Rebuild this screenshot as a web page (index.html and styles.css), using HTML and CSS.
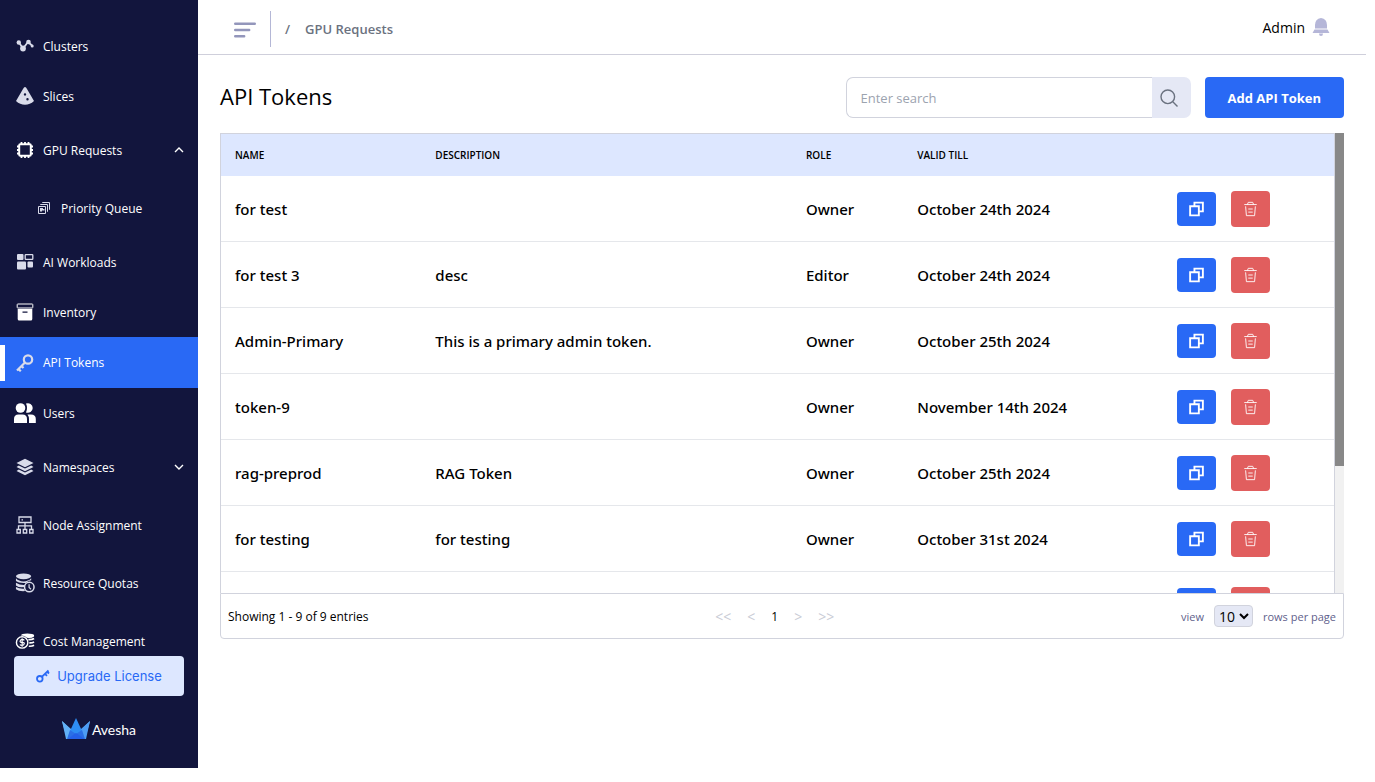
FILE: index.html
```
<!DOCTYPE html>
<html lang="en">

<head>
    <meta charset="UTF-8">
    <meta name="viewport" content="width=device-width, initial-scale=1.0">
    <title>API Tokens</title>
    <link rel="stylesheet" href="styles.css">
</head>

<body>

    <!-- icons shared by the table rows -->
    <svg class="sprite" aria-hidden="true">
        <symbol id="icon-copy" viewBox="0 0 16 16">
            <path d="M5.8 4.500V1.200h9v9.300h-3.300M1.200 5h9.300v9.800H1.200z" fill="none" stroke="currentColor" stroke-width="2" />
        </symbol>
        <symbol id="icon-trash" viewBox="0 0 16 18">
            <path d="M1 4h14M4.500 4l1-2.500h5l1 2.500M2.500 6l.9 10.500h9.200L13.500 6M5.500 9h5M5.500 12.500h5" fill="none" stroke="currentColor" />
        </symbol>
    </svg>

    <aside class="sidebar">
        <nav class="menu">
            <a href="#" class="menu-item">
                <svg class="icon" viewBox="0 0 18 18"><path d="M3 5.500l4 6 5-6.500 4 3.500" fill="none" stroke="currentColor" stroke-width="1.800" /><g fill="currentColor"><circle cx="2.800" cy="5.500" r="2.200" /><circle cx="7" cy="11.500" r="2.900" /><circle cx="12.500" cy="5" r="2.300" /><circle cx="16.200" cy="9" r="1.500" /></g></svg>
                Clusters
            </a>
            <a href="#" class="menu-item">
                <svg class="icon" viewBox="0 0 18 18"><path fill="currentColor" fill-rule="evenodd" d="M9 0Q10 0 11 2l7 12Q14 17.800 9 17.800T0 14L7 2Q8 0 9 0zM9 6.200a1.200 1.200 0 1 0 0 2.400 1.200 1.200 0 0 0 0-2.400zM11.500 11a1.200 1.200 0 1 0 0 2.400 1.200 1.200 0 0 0 0-2.400z" /></svg>
                Slices
            </a>
            <a href="#" class="menu-item tall">
                <svg class="icon bright" viewBox="0 0 18 18"><rect x="3.200" y="3.200" width="11.600" height="11.600" rx="1" fill="none" stroke="currentColor" stroke-width="2" /><path d="M5.500 1v2M9 1v2M12.500 1v2M5.500 15v2M9 15v2M12.500 15v2M1 5.500h2M1 9h2M1 12.500h2M15 5.500h2M15 9h2M15 12.500h2" stroke="currentColor" stroke-width="1.800" /></svg>
                GPU Requests
                <svg class="chevron" viewBox="0 0 10 6"><path d="M1 5l4-4 4 4" /></svg>
            </a>
            <a href="#" class="menu-item tall sub">
                <svg class="icon small" viewBox="0 0 12 12"><g fill="none" stroke="currentColor"><path d="M.5 4.500h7v7h-7zM2.500 3V2.500h7v7H9M4.500 1V.5h7v7H11" /></g><path d="M2 6h3v1h1.500v1.500H4v1H2z" fill="currentColor" /></svg>
                Priority Queue
            </a>
            <a href="#" class="menu-item">
                <svg class="icon" viewBox="0 0 18 18"><g fill="currentColor"><rect x="1" y="1" width="6.500" height="6" rx="1" /><rect x="1" y="8.500" width="9" height="8" rx="1" /><rect x="11.500" y="8.500" width="5.500" height="6" rx="1" /></g><rect x="9.200" y="1.700" width="7.600" height="4.600" rx=".6" fill="none" stroke="currentColor" stroke-width="1.300" /></svg>
                AI Workloads
            </a>
            <a href="#" class="menu-item">
                <svg class="icon bright" viewBox="0 0 18 18"><rect x="1.200" y="1" width="15.600" height="4" rx=".6" fill="none" stroke="currentColor" /><path fill="currentColor" fill-rule="evenodd" d="M1.700 6h14.600v10a1.500 1.500 0 0 1-1.500 1.500H3.200A1.500 1.500 0 0 1 1.700 16zM6.500 8.500v1.200h5V8.500z" /></svg>
                Inventory
            </a>
            <a href="#" class="menu-item active">
                <svg class="icon" viewBox="0 0 18 18"><g fill="none" stroke="currentColor" stroke-width="2.200"><circle cx="12" cy="5.500" r="4.200" /><path d="M9 8.500l-8 8M2 14.500l2.800 2.800M5 11.500l2.500 2.500" /></g></svg>
                API Tokens
            </a>
            <a href="#" class="menu-item">
                <svg class="icon bright large" viewBox="0 0 22 20"><g fill="currentColor"><circle cx="6.500" cy="5" r="4.800" /><path d="M0 20v-4q0-4.500 4.500-4.500h4q4.500 0 4.500 4.500v4zM12 .6a4.800 4.800 0 1 1 0 8.800q2-4.400 0-8.800zM14 11.500h3q4.800 0 4.800 4.500v4H15v-4q0-2.500-1.500-4.500z" /></g></svg>
                Users
            </a>
            <a href="#" class="menu-item tall">
                <svg class="icon" viewBox="0 0 18 18"><g fill="currentColor"><path d="M9 .8L17.500 5 9 9.200.5 5z" /><path d="M2.800 7.600L9 10.600l6.200-3L17.500 9 9 13.200.5 9z" /><path d="M2.800 11.600L9 14.600l6.200-3 2.300 1.400L9 17.200.5 13z" /></g></svg>
                Namespaces
                <svg class="chevron" viewBox="0 0 10 6"><path d="M1 1l4 4 4-4" /></svg>
            </a>
            <a href="#" class="menu-item tall">
                <svg class="icon" viewBox="0 0 18 18"><g fill="none" stroke="currentColor" stroke-width="1.300"><path d="M3 1h12v5.500H3zM9 6.500v6.500M2.500 13V9.800h13V13M1 13.500h3.300V17H1zM7.300 13.500h3.400V17H7.300zM13.700 13.500H17V17h-3.300zM5.500 3.800H7" /></g></svg>
                Node Assignment
            </a>
            <a href="#" class="menu-item tall">
                <svg class="icon large" viewBox="0 0 21 21"><g fill="currentColor"><ellipse cx="9" cy="3.500" rx="8" ry="3" /><path d="M1 5.500Q4 8.800 9 8.800q5 0 8-3.300v2q-3 0-5.500 3Q4 11 1 8.500zM1 10.200q4 2.500 9 2.300l-.5 2.300Q4 15.500 1 13zM1 14.800q4 2.200 8.500 1.700l1 2.500Q4 19.500 1 17z" /></g><circle cx="15" cy="14.800" r="5" fill="none" stroke="currentColor" stroke-width="1.600" /><path d="M14.800 11.800v3.500l2 1.700" fill="none" stroke="currentColor" stroke-width="1.300" /></svg>
                Resource Quotas
            </a>
            <a href="#" class="menu-item tall">
                <svg class="icon bright large" viewBox="0 0 21 21"><g fill="none" stroke="currentColor" stroke-width="1.500"><circle cx="7.500" cy="12" r="6" /><path d="M9.800 9.800Q9 8.800 7.500 8.800T5.400 10.400t2.100 1.600 2.200 1.600-2.200 1.600T5.200 14.200M7.500 7.500v9" stroke-width="1.200" /><path d="M14 9q4 .2 6-1.200M15 12.500q3 .2 5-1M14.500 16q3.500.2 5.500-1" stroke-width="1.800" /></g><path d="M6 4.800Q6.500 2.500 13 2.500t7 1.700v1.500Q17 8 12.500 7 10 4.600 6 4.800z" fill="currentColor" /></svg>
                Cost Management
            </a>
        </nav>
        <div class="sidebar-bottom">
            <button class="upgrade">
                <svg viewBox="0 0 14 14"><g fill="none" stroke="currentColor" stroke-width="1.800"><circle cx="3.800" cy="9.800" r="2.800" /><path d="M5.800 7.800L12.500 1.500M9 4.800l2 2M11 2.500l2 2" /></g></svg>
                Upgrade License
            </button>
            <div class="logo">
                <svg viewBox="0 0 28 22"><path d="M0 3l8 8L5 21z" fill="#7cc4f8" /><path d="M28 3l-8 8 3 10z" fill="#7cc4f8" /><path d="M0 3l9 8 5 10H4z" fill="#62b1f7" /><path d="M28 3l-9 8-5 10h10z" fill="#4d9df5" /><path d="M14 0l6 13-6 4-6-4z" fill="#2e8df3" /><path d="M8 12l6 4-9 5zM20 12l-6 4 9 5z" fill="#2b6fe6" /><path d="M14 15l9 6H5z" fill="#2460e8" /></svg>
                <span>Avesha</span>
            </div>
        </div>
    </aside>

    <main class="main">
        <header class="topbar">
            <button class="toggle" aria-label="Toggle menu">
                <svg viewBox="0 0 22 16"><path d="M1.200 1.800h19.600M1.200 8h14M1.200 14.200h9" stroke="currentColor" stroke-width="2.400" stroke-linecap="round" /></svg>
            </button>
            <div class="breadcrumb">
                <span>/</span>
                <a href="#">GPU Requests</a>
            </div>
            <div class="account">
                <span>Admin</span>
                <svg viewBox="0 0 18 18"><path d="M9 0q6 1 6 7v3.500H3V7q0-6 6-7zM2.500 11.500h13L17.500 15H.5zM7 15.500h4Q11 18 9 18t-2-2.500z" fill="currentColor" /></svg>
            </div>
        </header>

        <section class="content">
            <div class="title-row">
                <h1>API Tokens</h1>
                <form class="search">
                    <input type="text" placeholder="Enter search" aria-label="Search">
                    <button type="button" aria-label="Search">
                        <svg viewBox="0 0 18 18"><g fill="none" stroke="currentColor" stroke-width="1.400"><circle cx="7.800" cy="7.800" r="6.800" /><path d="M12.800 12.800l4.700 4.700" /></g></svg>
                    </button>
                </form>
                <button class="add">Add API Token</button>
            </div>

            <div class="table-box">
                <div class="table-scroll">
                    <table class="tokens">
                        <colgroup>
                            <col class="col-name">
                            <col class="col-description">
                            <col class="col-role">
                            <col class="col-valid">
                            <col>
                        </colgroup>
                        <thead>
                            <tr><th>NAME</th><th>DESCRIPTION</th><th>ROLE</th><th>VALID TILL</th><th></th></tr>
                        </thead>
                        <tbody>
                            <tr>
                                <td>for test</td><td></td><td>Owner</td><td>October 24th 2024</td>
                                <td><div class="actions"><button class="copy" aria-label="Copy"><svg><use href="#icon-copy" /></svg></button><button class="delete" aria-label="Delete"><svg><use href="#icon-trash" /></svg></button></div></td>
                            </tr>
                            <tr>
                                <td>for test 3</td><td>desc</td><td>Editor</td><td>October 24th 2024</td>
                                <td><div class="actions"><button class="copy" aria-label="Copy"><svg><use href="#icon-copy" /></svg></button><button class="delete" aria-label="Delete"><svg><use href="#icon-trash" /></svg></button></div></td>
                            </tr>
                            <tr>
                                <td>Admin-Primary</td><td>This is a primary admin token.</td><td>Owner</td><td>October 25th 2024</td>
                                <td><div class="actions"><button class="copy" aria-label="Copy"><svg><use href="#icon-copy" /></svg></button><button class="delete" aria-label="Delete"><svg><use href="#icon-trash" /></svg></button></div></td>
                            </tr>
                            <tr>
                                <td>token-9</td><td></td><td>Owner</td><td>November 14th 2024</td>
                                <td><div class="actions"><button class="copy" aria-label="Copy"><svg><use href="#icon-copy" /></svg></button><button class="delete" aria-label="Delete"><svg><use href="#icon-trash" /></svg></button></div></td>
                            </tr>
                            <tr>
                                <td>rag-preprod</td><td>RAG Token</td><td>Owner</td><td>October 25th 2024</td>
                                <td><div class="actions"><button class="copy" aria-label="Copy"><svg><use href="#icon-copy" /></svg></button><button class="delete" aria-label="Delete"><svg><use href="#icon-trash" /></svg></button></div></td>
                            </tr>
                            <tr>
                                <td>for testing</td><td>for testing</td><td>Owner</td><td>October 31st 2024</td>
                                <td><div class="actions"><button class="copy" aria-label="Copy"><svg><use href="#icon-copy" /></svg></button><button class="delete" aria-label="Delete"><svg><use href="#icon-trash" /></svg></button></div></td>
                            </tr>
                            <tr>
                                <td></td><td></td><td></td><td></td>
                                <td><div class="actions"><button class="copy" aria-label="Copy"><svg><use href="#icon-copy" /></svg></button><button class="delete" aria-label="Delete"><svg><use href="#icon-trash" /></svg></button></div></td>
                            </tr>
                        </tbody>
                    </table>
                </div>
                <div class="scrollbar"><div class="scrollbar-thumb"></div></div>
            </div>

            <div class="pagination">
                <span class="entries">Showing 1 - 9 of 9 entries</span>
                <div class="pages">
                    <button disabled>&lt;&lt;</button>
                    <button disabled>&lt;</button>
                    <button class="current">1</button>
                    <button disabled>&gt;</button>
                    <button disabled>&gt;&gt;</button>
                </div>
                <div class="page-size">
                    <label for="rows">view</label>
                    <select id="rows">
                        <option>10</option>
                    </select>
                    <span>rows per page</span>
                </div>
            </div>
        </section>
    </main>

</body>

</html>
```
FILE: styles.css
```
* {
    box-sizing: border-box;
}

body {
    margin: 0;
    padding: 0 9px 14px 0;
    height: 100vh;
    display: flex;
    background-color: white;
    color: black;
    font-family: "Open Sans", "Noto Sans", sans-serif;
}

a {
    color: inherit;
    text-decoration: none;
}

button, input, select {
    font-family: inherit;
}

button {
    border: none;
    padding: 0;
    cursor: pointer;
}

svg {
    flex-shrink: 0;
}

.sprite {
    display: none;
}

/* Sidebar */
.sidebar {
    width: 198px;
    flex-shrink: 0;
    display: flex;
    flex-direction: column;
    background-color: #12153d;
    color: white;
}

.menu {
    flex: 1;
    min-height: 0;
    overflow: hidden;
    padding-top: 21px;
}

.menu-item {
    display: flex;
    align-items: center;
    gap: 7px;
    height: 50px;
    padding: 0 14px;
    font-size: 12px;
}

.menu-item.tall {
    height: 58px;
}

.menu-item.sub {
    padding-left: 34px;
}

.menu-item.active {
    height: 51px;
    background-color: #2969f5;
    background-image: radial-gradient(circle at left, white, white);
    background-size: 5px 36px;
    background-position: left center;
    background-repeat: no-repeat;
}

.icon {
    width: 18px;
    height: 18px;
    margin: 0 2px;
    color: #d9dbea;
}

.icon.bright {
    color: white;
}

.icon.large {
    width: 22px;
    height: 20px;
    margin: 0;
}

.icon.small {
    width: 12px;
    height: 12px;
    margin: 0 4px;
}

.chevron {
    width: 10px;
    height: 6px;
    margin-left: auto;
    fill: none;
    stroke: white;
    stroke-width: 1.400;
}

.sidebar-bottom {
    height: 112px;
    padding: 0 14px;
}

.upgrade {
    display: flex;
    align-items: center;
    justify-content: center;
    gap: 7px;
    width: 100%;
    height: 40px;
    border-radius: 4px;
    background-color: #dde7ff;
    color: #2969f5;
    font-family: Inter, sans-serif;
    font-size: 13px;
}

.upgrade svg {
    width: 14px;
    height: 14px;
}

.logo {
    display: flex;
    align-items: center;
    justify-content: center;
    gap: 2px;
    margin-top: 22px;
    font-family: Lato, sans-serif;
    font-size: 14px;
}

.logo svg {
    width: 28px;
    height: 22px;
}

/* Top bar */
.main {
    flex: 1;
    min-width: 0;
}

.topbar {
    display: flex;
    align-items: center;
    height: 55px;
    padding: 0 36px;
    border-bottom: 1px solid #cfcfdb;
}

.toggle {
    height: 36px;
    margin-top: 3px;
    padding: 0 14px 0 0;
    border-right: 1px solid #b4b7d6;
    background: none;
    color: #9396bb;
}

.toggle svg {
    width: 22px;
    height: 16px;
    vertical-align: middle;
}

.breadcrumb {
    display: flex;
    gap: 15px;
    padding: 3px 0 0 14px;
    color: #6b7280;
    font-size: 13px;
    font-weight: 600;
}

.account {
    display: flex;
    align-items: center;
    gap: 7px;
    margin-left: auto;
    font-size: 14px;
}

.account svg {
    width: 18px;
    height: 18px;
    color: #b5b6d8;
}

/* Title and search */
.content {
    padding: 22px;
}

.title-row {
    display: flex;
    align-items: center;
    gap: 14px;
    margin-bottom: 15px;
}

h1 {
    margin: 0 auto 0 0;
    padding-bottom: 4px;
    font-size: 22px;
    font-weight: 500;
}

.search {
    display: flex;
    width: 345px;
    height: 41px;
}

.search input {
    flex: 1;
    min-width: 0;
    padding: 0 14px;
    border: 1px solid #d1d3dd;
    border-right: none;
    border-radius: 7px 0 0 7px;
    font-size: 13px;
}

.search input::placeholder {
    color: #9ca3af;
}

.search button {
    width: 39px;
    padding-right: 4px;
    border-radius: 0 7px 7px 0;
    background-color: #e5e8f5;
    color: #6b7280;
}

.search svg {
    width: 18px;
    height: 18px;
    vertical-align: middle;
}

.add {
    height: 41px;
    padding: 0 23px;
    border-radius: 4px;
    background-color: #2969f5;
    color: white;
    font-size: 13px;
    font-weight: 700;
}

/* Table */
.table-box {
    display: flex;
    height: 460px;
}

.table-scroll {
    flex: 1;
    min-width: 0;
    overflow: hidden;
    border: solid #d1d3dd;
    border-width: 1px 1px 0;
}

.scrollbar {
    width: 9px;
    background-color: #f1f1f1;
}

.scrollbar-thumb {
    height: 72.4%;
    background-color: #888;
}

.tokens {
    width: 100%;
    table-layout: fixed;
    border-collapse: separate;
    border-spacing: 0;
}

.col-name {
    width: 18%;
}

.col-description {
    width: 33.3%;
}

.col-role {
    width: 10%;
}

.col-valid {
    width: 23.3%;
}

.tokens th {
    height: 42px;
    padding: 0 14px;
    background-color: #dde7ff;
    font-size: 10px;
    font-weight: 600;
    text-align: left;
}

.tokens td {
    height: 66px;
    padding: 0 14px;
    border-bottom: 1px solid #e5e7eb;
    font-family: "Noto Sans", "Open Sans", sans-serif;
    font-size: 15px;
    font-weight: 500;
}

.actions {
    display: flex;
    align-items: center;
    gap: 15px;
}

.actions button {
    display: flex;
    align-items: center;
    justify-content: center;
    width: 39px;
    height: 34px;
    border-radius: 4px;
    background-color: #2969f5;
    color: white;
}

.actions .delete {
    height: 36px;
    background-color: #e15e5e;
}

.actions svg {
    width: 15px;
    height: 16px;
}

/* Pagination */
.pagination {
    display: flex;
    align-items: center;
    justify-content: space-between;
    height: 46px;
    padding: 0 7px;
    border: 1px solid #d1d3dd;
    border-radius: 0 0 4px 4px;
    font-size: 12px;
}

.pages {
    display: flex;
    align-items: center;
    gap: 16px;
}

.pages button {
    background: none;
    color: black;
    font-size: 12px;
}

.pages button:disabled {
    color: #c9ccd6;
    font-size: 14px;
}

.page-size {
    display: flex;
    align-items: center;
    gap: 10px;
    color: #5f5f8c;
    font-size: 11px;
}

.page-size select {
    height: 22px;
    border: 1px solid #d1d3dd;
    border-radius: 4px;
    background-color: #e5e8f5;
    font-size: 14px;
}
```
